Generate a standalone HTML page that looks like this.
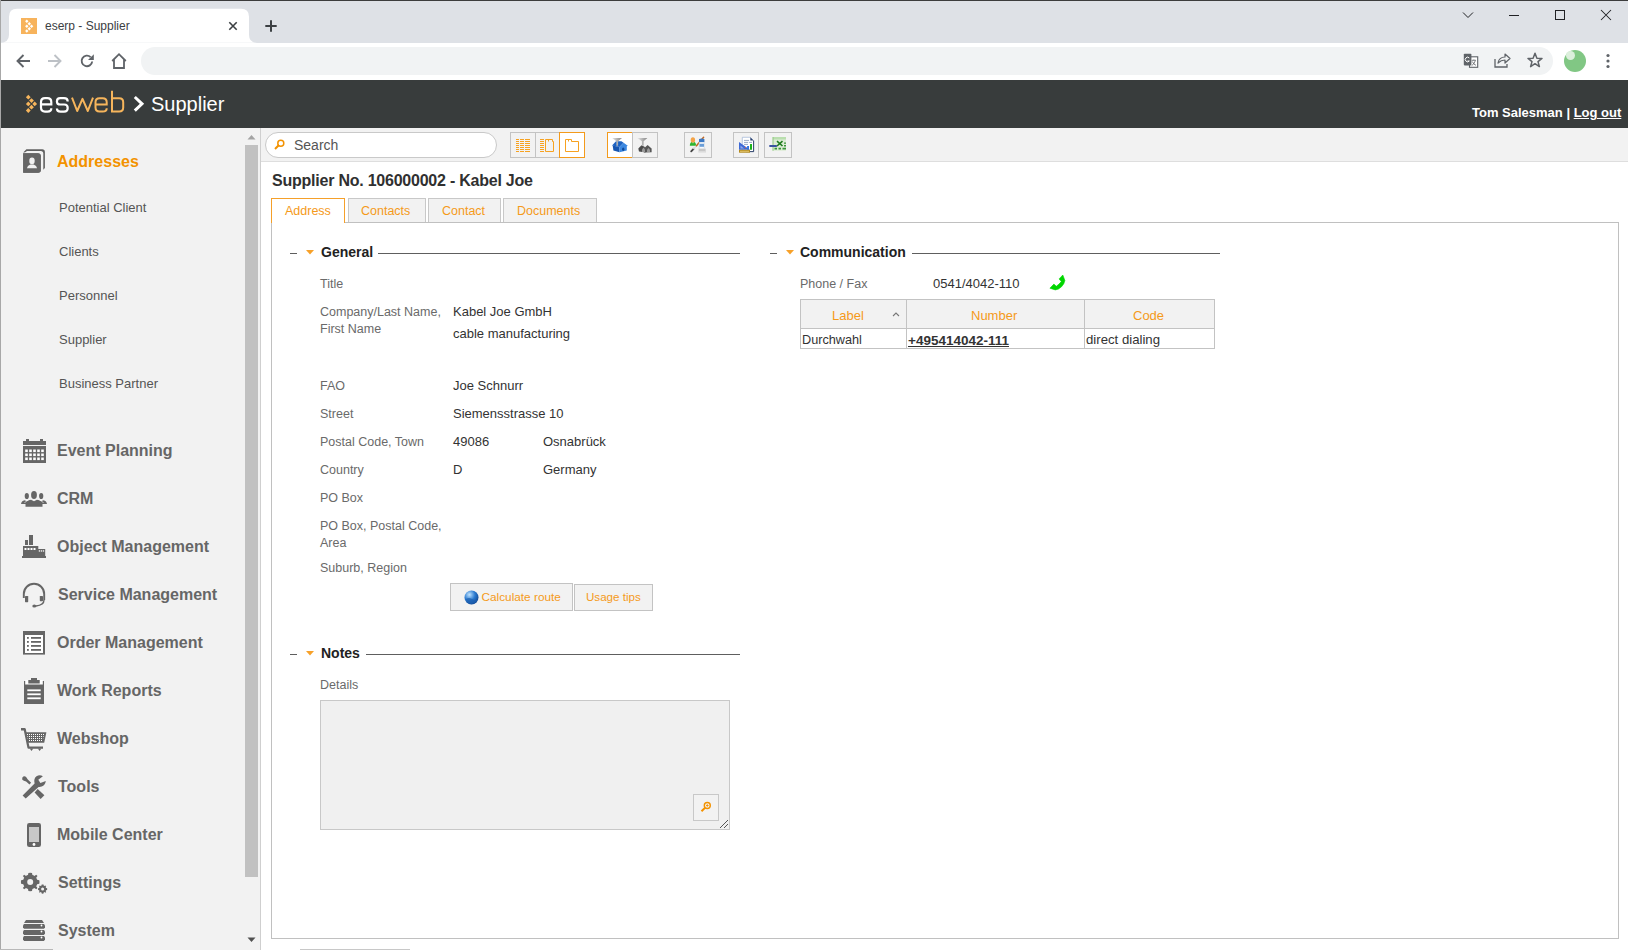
<!DOCTYPE html>
<html><head><meta charset="utf-8">
<style>
*{box-sizing:border-box;margin:0;padding:0}
html,body{width:1628px;height:950px;overflow:hidden;background:#fff;font-family:"Liberation Sans",sans-serif;position:relative}
.a{position:absolute}
.t{position:absolute;line-height:1;white-space:nowrap}
svg{position:absolute;overflow:visible}
#tabbar{left:0;top:0;width:1628px;height:43px;background:#dee1e6;border-top:1px solid #3c3c3c}
#tab{left:8px;top:8px;width:241px;height:34px;background:#fff;border-radius:8px 8px 0 0}
#toolbar{left:0;top:42.7px;width:1628px;height:37.3px;background:#fff}
#omni{left:141px;top:47px;width:1412px;height:28px;background:#f1f3f4;border-radius:14px}
#lframe{left:0;top:0;width:1px;height:950px;background:#a8a8a8}
#apphdr{left:0;top:80px;width:1628px;height:48px;background:#383c3c}
#sidebar{left:0;top:128px;width:260px;height:822px;background:#f2f2f2}
#sbline{left:260px;top:128px;width:1px;height:822px;background:#cfcfcf}
#tb2{left:261px;top:128px;width:1367px;height:34px;background:#f2f2f2;border-bottom:1px solid #dedede}
.side{color:#666;font-weight:bold;font-size:16px}
.sub{color:#555;font-size:13px}
.lbl{color:#6a6a6a;font-size:12.5px}
.val{color:#333;font-size:13px}
.hd{color:#222;font-weight:bold;font-size:14px}
.btn{position:absolute;border:1px solid #c3c3c3;background:#f2f2f2}
.tabx{position:absolute;background:#f2f2f2;border:1px solid #c8c8c8;border-bottom:none}
.or{color:#f59a1a}
</style></head><body>
<!-- browser chrome -->
<div id="tabbar" class="a"></div>
<svg style="left:0;top:0" width="300" height="44" viewBox="0 0 300 44"><path d="M0 42.7Q9 42.7 9 34.7V16.7Q9 8.7 17 8.7H241Q249 8.7 249 16.7V34.7Q249 42.7 257 42.7z" fill="#fff"/></svg>
<div id="toolbar" class="a"></div>
<div id="omni" class="a"></div>
<!-- favicon -->
<div class="a" style="left:21px;top:18px;width:16px;height:16px;background:#f7b35c"></div>
<svg style="left:21px;top:18px" width="16" height="16" viewBox="21 18 16 16"><g fill="#fff"><path d="M26.8 19.6L28.5 21.3L26.8 23L25.1 21.3z"/><path d="M29.3 22L31 23.7L29.3 25.4L27.6 23.7z"/><path d="M26.8 24.6L28.5 26.3L26.8 28L25.1 26.3z"/><path d="M31.6 24.6L33.3 26.3L31.6 28L29.9 26.3z"/><path d="M29.3 27L31 28.7L29.3 30.4L27.6 28.7z"/><path d="M26.8 29.3L28.5 31L26.8 32.7L25.1 31z"/></g></svg>
<div class="t" style="left:45px;top:20px;font-size:12px;color:#3c4043">eserp - Supplier</div>
<svg style="left:228px;top:21px" width="10" height="10" viewBox="0 0 10 10"><path d="M1.3 1.3L8.7 8.7M8.7 1.3L1.3 8.7" stroke="#3c4043" stroke-width="1.6"/></svg>
<svg style="left:264px;top:19px" width="14" height="14" viewBox="0 0 14 14"><path d="M7 1.3V12.7M1.3 7H12.7" stroke="#3c4043" stroke-width="2"/></svg>
<!-- window controls -->
<svg style="left:1462px;top:11px" width="12" height="8" viewBox="0 0 12 8"><path d="M1 1.5L6 6.5L11 1.5" stroke="#202124" stroke-width="1" fill="none"/></svg>
<svg style="left:1500px;top:0" width="128" height="30" viewBox="1500 0 128 30"><rect x="1509" y="15" width="10" height="1" fill="#202124"/><rect x="1555.5" y="10.5" width="9" height="9" stroke="#202124" stroke-width="1" fill="none"/><path d="M1601 10L1611 20M1611 10L1601 20" stroke="#202124" stroke-width="1.05"/></svg>
<!-- nav icons -->
<svg style="left:16px;top:54px" width="14" height="14" viewBox="0 0 14 14"><path d="M14 7H1.5M7.5 1L1.5 7L7.5 13" stroke="#5f6368" stroke-width="1.9" fill="none"/></svg>
<svg style="left:48px;top:54px" width="14" height="14" viewBox="0 0 14 14"><path d="M0 7H12.5M6.5 1L12.5 7L6.5 13" stroke="#bdc1c6" stroke-width="1.9" fill="none"/></svg>
<svg style="left:80px;top:54px" width="14" height="14" viewBox="0 0 14 14"><path d="M12.2 7.5A5.3 5.3 0 1 1 10.6 3.1" stroke="#5f6368" stroke-width="1.9" fill="none"/><path d="M13.8 0.2V6H8z" fill="#5f6368"/></svg>
<svg style="left:111px;top:53px" width="16" height="16" viewBox="0 0 16 16"><path d="M1.2 8L8 1.2L14.8 8M3 6.5V15H13V6.5" stroke="#5f6368" stroke-width="1.8" fill="none" stroke-linejoin="miter"/></svg>
<!-- right chrome icons -->
<svg style="left:1463px;top:53px" width="16" height="16" viewBox="0 0 16 16"><rect x="6.5" y="3.8" width="8.2" height="10.5" fill="#fff" stroke="#5f6368" stroke-width="1.1"/><rect x="0.8" y="0.8" width="7.6" height="11.6" rx="0.8" fill="#5f6368"/><path d="M6.3 5A2.3 2.3 0 1 0 6.3 8H4.5" stroke="#fff" stroke-width="1" fill="none"/><path d="M8.8 7.3H13M10.9 6.5V7.3M9.3 8.5Q10.8 11.8 13 12.3M12.3 7.8Q11 11.5 8.6 12.6" stroke="#5f6368" stroke-width="0.8" fill="none"/></svg>
<svg style="left:1494px;top:53px" width="17" height="15" viewBox="0 0 17 15"><path d="M1 6V14H13V11" stroke="#5f6368" stroke-width="1.3" fill="none"/><path d="M4 10Q5 4 11 4V1L16 5.5L11 10V7Q7 7 4 10z" stroke="#5f6368" stroke-width="1.2" fill="none" stroke-linejoin="round"/></svg>
<svg style="left:1527px;top:52px" width="16" height="16" viewBox="0 0 16 16"><path d="M8 1.3L9.9 6.2L15 6.4L11 9.6L12.4 14.6L8 11.7L3.6 14.6L5 9.6L1 6.4L6.1 6.2z" stroke="#5f6368" stroke-width="1.5" fill="none" stroke-linejoin="round"/></svg>
<div class="a" style="left:1564px;top:50px;width:22px;height:22px;border-radius:50%;background:#81c784"></div>
<div class="a" style="left:1566px;top:51px;width:9px;height:9px;border-radius:50%;background:#dcefdc"></div>
<svg style="left:1605.5px;top:53px" width="4" height="16" viewBox="0 0 4 16"><circle cx="2" cy="2.5" r="1.6" fill="#5f6368"/><circle cx="2" cy="8" r="1.6" fill="#5f6368"/><circle cx="2" cy="13.5" r="1.6" fill="#5f6368"/></svg>

<!-- app header -->
<div id="apphdr" class="a"></div>
<svg style="left:0;top:80px" width="150" height="48" viewBox="0 80 150 48">
 <g fill="#f6b55c"><path d="M28.3 94.8L30.7 97.2L28.3 99.6L25.9 97.2z"/><path d="M31.5 98.2L33.9 100.6L31.5 103L29.1 100.6z"/><path d="M28.3 101.5L30.7 103.9L28.3 106.3L25.9 103.9z"/><path d="M34.7 101.5L37.1 103.9L34.7 106.3L32.3 103.9z"/><path d="M31.5 104.8L33.9 107.2L31.5 109.6L29.1 107.2z"/><path d="M28.3 108.1L30.7 110.5L28.3 112.9L25.9 110.5z"/></g>
 <g fill="none" stroke-width="2.2">
  <path stroke="#fff" d="M41 104.4H51.3V102.2Q51.3 98.2 47.3 98.2H45Q41 98.2 41 102.2V107.6Q41 111.6 45 111.6H47.5Q51.3 111.6 51.3 108.3"/>
  <path stroke="#fff" d="M67.7 101.5Q67.7 98.2 64 98.2H60.3Q56.9 98.2 56.9 101.4Q56.9 104.5 60.3 104.5H64.3Q67.7 104.5 67.7 108Q67.7 111.6 64 111.6H60.5Q56.9 111.6 56.9 108.5"/>
 </g>
 <g fill="none" stroke-width="2" stroke="#f6b55c">
  <path stroke-linejoin="round" d="M72 97.6L77.2 111L82.5 98.8L87.8 111L93 97.6"/>
  <path d="M95.5 104.4H106.7V102.2Q106.7 98.2 102.7 98.2H99.5Q95.5 98.2 95.5 102.2V107.6Q95.5 111.6 99.5 111.6H102.7Q106.7 111.6 106.7 108.3"/>
  <path d="M112 90.8V111.6H119.2Q123.2 111.6 123.2 107.6V102.2Q123.2 98.2 119.2 98.2H112"/>
 </g>
</svg>
<svg style="left:133px;top:96px" width="11" height="16" viewBox="0 0 11 16"><path d="M1.8 1L9 7.8L1.8 14.6" stroke="#fff" stroke-width="3" fill="none"/></svg>
<div class="t" style="left:151px;top:94px;font-size:20px;color:#fff">Supplier</div>
<div class="t" style="left:1472px;top:106px;font-size:13px;color:#fff;font-weight:bold">Tom Salesman | <span style="text-decoration:underline">Log out</span></div>

<!-- sidebar -->
<div id="sidebar" class="a"></div>
<div id="lframe" class="a"></div>
<div id="sbline" class="a"></div>
<!-- scrollbar -->
<div class="a" style="left:245px;top:145px;width:13px;height:732px;background:#c1c1c1"></div>
<svg style="left:247px;top:134px" width="9" height="6" viewBox="0 0 9 6"><path d="M0.5 5.5L4.5 1L8.5 5.5z" fill="#a3a3a3"/></svg>
<svg style="left:247px;top:937px" width="9" height="6" viewBox="0 0 9 6"><path d="M0.5 0.5L4.5 5L8.5 0.5z" fill="#505050"/></svg>

<!-- Addresses -->
<svg style="left:20px;top:146px" width="28" height="30" viewBox="20 146 28 30">
 <path d="M23.2 152.6L26.4 149.2H42.2Q44.9 149.2 44.9 151.9V168.1L43.3 169.8V153.4Q43.3 150.9 40.7 150.9H27L24.9 152.6z" fill="#616161"/>
 <path d="M23.2 153.3H37.8Q40.8 153.3 40.8 156.3V170.1Q40.8 172.8 38.1 172.8H23.2z" fill="#666" stroke="#fafafa" stroke-width="0.9" paint-order="stroke"/>
 <path d="M23.2 153.3H37.8Q40.8 153.3 40.8 156.3V170.1Q40.8 172.8 38.1 172.8H23.2z" fill="#666"/>
 <ellipse cx="32" cy="160.9" rx="2.7" ry="3.3" fill="#f0f0f0"/>
 <path d="M26.9 168.3Q27.3 165.8 30.3 164.6H33.7Q36.7 165.8 37.1 168.3z" fill="#f0f0f0"/>
</svg>
<div class="t" style="left:57px;top:153.5px;font-size:16px;font-weight:bold;color:#f39200">Addresses</div>
<div class="t sub" style="left:59px;top:201px">Potential Client</div>
<div class="t sub" style="left:59px;top:245px">Clients</div>
<div class="t sub" style="left:59px;top:289px">Personnel</div>
<div class="t sub" style="left:59px;top:333px">Supplier</div>
<div class="t sub" style="left:59px;top:377px">Business Partner</div>

<svg style="left:0;top:0" width="60" height="950" viewBox="0 0 60 950">
 <g fill="#666">
  <!-- calendar -->
  <rect x="26" y="439" width="3" height="3"/><rect x="40" y="439" width="3" height="3"/>
  <rect x="23" y="441" width="23" height="4"/>
  <path d="M23 446H46V463H23z"/>
 </g>
 <g fill="#fff">
  <rect x="25.2" y="449.5" width="2.6" height="2.6"/><rect x="29.2" y="449.5" width="2.6" height="2.6"/><rect x="33.2" y="449.5" width="2.6" height="2.6"/><rect x="37.2" y="449.5" width="2.6" height="2.6"/><rect x="41.2" y="449.5" width="2.6" height="2.6"/>
  <rect x="25.2" y="453.5" width="2.6" height="2.6"/><rect x="29.2" y="453.5" width="2.6" height="2.6"/><rect x="33.2" y="453.5" width="2.6" height="2.6"/><rect x="37.2" y="453.5" width="2.6" height="2.6"/><rect x="41.2" y="453.5" width="2.6" height="2.6"/>
  <rect x="25.2" y="457.5" width="2.6" height="2.6"/><rect x="29.2" y="457.5" width="2.6" height="2.6"/><rect x="33.2" y="457.5" width="2.6" height="2.6"/><rect x="37.2" y="457.5" width="2.6" height="2.6"/><rect x="41.2" y="457.5" width="2.6" height="2.6"/>
 </g>
 <g fill="#666">
  <!-- CRM -->
  <ellipse cx="26.8" cy="496" rx="2.1" ry="3.1"/><path d="M21 504Q21.3 501 24.6 500.2L26.8 501.2L29 500.2L31 501V504z"/>
  <ellipse cx="41.2" cy="496" rx="2.1" ry="3.1"/><path d="M47 504Q46.7 501 43.4 500.2L41.2 501.2L39 500.2L37 501V504z"/>
  <path d="M24.5 503Q26 500.5 29 500.2" stroke="#fff" stroke-width="0.8" fill="none" opacity="0.8"/><path d="M43.5 503Q42 500.5 39 500.2" stroke="#fff" stroke-width="0.8" fill="none" opacity="0.8"/>
  <ellipse cx="34" cy="495" rx="2.9" ry="4.1"/><path d="M25.5 506.8V503.8Q26.8 500.6 31 499.8L34 501.2L37 499.8Q41.2 500.6 42.5 503.8V506.8z"/>
  <!-- factory -->
  <rect x="25" y="540" width="3" height="5"/><rect x="29" y="535" width="4" height="10"/>
  <path d="M23 546H38.3V549H45.2V556H23z"/><rect x="22" y="556" width="24" height="2"/>
  <!-- headset -->
  <path d="M23.8 598V594A10.2 10.2 0 0 1 44.2 594V600" stroke="#666" stroke-width="1.9" fill="none"/>
  <rect x="25" y="596" width="3.2" height="6.2" rx="0.6"/><rect x="39.8" y="596" width="3.2" height="5.2" rx="0.6"/>
  <path d="M44 600Q44 605 36 606" stroke="#666" stroke-width="1.4" fill="none"/><ellipse cx="34.3" cy="606" rx="2" ry="1.5"/>
  <!-- order list -->
  <path d="M23 631H45V654.6H23z"/>
  <!-- clipboard -->
  <rect x="24" y="681" width="20" height="23"/>
 </g>
 <g fill="#fff">
  <rect x="23.7" y="546.8" width="1.4" height="1.4" opacity="0"/>
  <rect x="24.5" y="548" width="2" height="2"/><rect x="27.5" y="548" width="2" height="2"/><rect x="30.5" y="548" width="2" height="2"/><rect x="33.5" y="548" width="2" height="2"/>
  <rect x="38.8" y="550.3" width="1.3" height="1.3"/><rect x="40.8" y="550.3" width="1.3" height="1.3"/><rect x="42.8" y="550.3" width="1.3" height="1.3"/>
  <rect x="25" y="635" width="18" height="18"/>
  <rect x="25.2" y="680" width="17.6" height="4.5"/>
  <rect x="27.3" y="689.4" width="13.4" height="1.8"/><rect x="27.3" y="693.4" width="13.4" height="1.8"/><rect x="27.3" y="697.4" width="13.4" height="1.8"/>
 </g>
 <g fill="#666">
  <rect x="27" y="637" width="1.8" height="1.8"/><rect x="27" y="641" width="1.8" height="1.8"/><rect x="27" y="645" width="1.8" height="1.8"/><rect x="27" y="649" width="1.8" height="1.8"/>
  <rect x="31" y="637" width="10" height="1.8"/><rect x="31" y="641" width="10" height="1.8"/><rect x="31" y="645" width="10" height="1.8"/><rect x="31" y="649" width="10" height="1.8"/>
  <rect x="31" y="678" width="6" height="2"/><path d="M28.3 680H39.7V683.5H28.3z"/>
  <!-- cart -->
  <path d="M21 728H24.6Q25.6 728 25.8 729L29.4 746.6H43V748.8H28.5Q27.6 748.8 27.4 747.8L23.8 730.6H21z"/>
  <path d="M25.7 732.3H46.4L44.2 742.8H27.9z"/>
  <path d="M29.7 748.5H33.3L31.5 751.1zM37.8 748.5H41.4L39.6 751.1z"/>
 </g>
 <g fill="#fff">
  <rect x="27" y="734" width="1" height="1"/>
  <rect x="29" y="734" width="1" height="1"/>
  <rect x="31" y="734" width="1" height="1"/>
  <rect x="33" y="734" width="1" height="1"/>
  <rect x="35" y="734" width="1" height="1"/>
  <rect x="37" y="734" width="1" height="1"/>
  <rect x="39" y="734" width="1" height="1"/>
  <rect x="41" y="734" width="1" height="1"/>
  <rect x="43" y="734" width="1" height="1"/>
  <rect x="27" y="736" width="1" height="1" opacity="0.6"/>
  <rect x="29" y="736" width="1" height="1"/>
  <rect x="31" y="736" width="1" height="1"/>
  <rect x="33" y="736" width="1" height="1"/>
  <rect x="35" y="736" width="1" height="1"/>
  <rect x="37" y="736" width="1" height="1"/>
  <rect x="39" y="736" width="1" height="1"/>
  <rect x="41" y="736" width="1" height="1"/>
  <rect x="43" y="736" width="1" height="1" opacity="0.6"/>
  <rect x="27" y="738" width="1" height="1" opacity="0.25"/>
  <rect x="29" y="738" width="1" height="1"/>
  <rect x="31" y="738" width="1" height="1"/>
  <rect x="33" y="738" width="1" height="1"/>
  <rect x="35" y="738" width="1" height="1"/>
  <rect x="37" y="738" width="1" height="1"/>
  <rect x="39" y="738" width="1" height="1"/>
  <rect x="41" y="738" width="1" height="1"/>
  <rect x="43" y="738" width="1" height="1" opacity="0.25"/>
  <rect x="29" y="740" width="1" height="1"/>
  <rect x="31" y="740" width="1" height="1"/>
  <rect x="33" y="740" width="1" height="1"/>
  <rect x="35" y="740" width="1" height="1"/>
  <rect x="37" y="740" width="1" height="1"/>
  <rect x="39" y="740" width="1" height="1"/>
  <rect x="41" y="740" width="1" height="1"/>
 </g>
 <g fill="#666">
  <!-- tools -->
  <path d="M22.3 779.7Q21.7 777.6 23.3 776.6Q24.9 775.8 26.3 777.2L27.8 779.4L31.1 782.8L29.5 784.6L26.1 781.4L23.9 780.8z"/>
  <path d="M34.6 792.4L37.7 789.1L44.4 795.3L40.6 799z"/>
  <path d="M22.6 795.4L34.6 783.4Q33.4 778.6 36.5 776.3Q39.6 774.2 42.9 776.3L38.3 779.8L40.4 783.1L45.8 781.1Q45.2 785.3 41.7 786.6Q39.7 787.3 38.6 786.9L25.7 798.4z"/>
  <!-- mobile -->
  <rect x="27" y="823" width="14" height="24" rx="2.3"/>
  <!-- gears -->
  <path d="M30.2 872.7L32 872.9L32.4 875.1A7 7 0 0 1 34.4 876L36.2 874.7L37.5 876L36.2 877.8A7 7 0 0 1 37.1 879.8L39.3 880.2L39.5 882L39.3 883.8L37.1 884.2A7 7 0 0 1 36.2 886.2L37.5 888L36.2 889.3L34.4 888A7 7 0 0 1 32.4 888.9L32 891.1L30.2 891.3L28.4 891.1L28 888.9A7 7 0 0 1 26 888L24.2 889.3L22.9 888L24.2 886.2A7 7 0 0 1 23.3 884.2L21.1 883.8L20.9 882L21.1 880.2L23.3 879.8A7 7 0 0 1 24.2 877.8L22.9 876L24.2 874.7L26 876A7 7 0 0 1 28 875.1L28.4 872.9z M30.2 879A3 3 0 1 0 30.2 885A3 3 0 1 0 30.2 879z" fill-rule="evenodd"/>
  <path d="M42.6 884.4L43.5 884.6L43.7 885.6A3.4 3.4 0 0 1 44.6 886.1L45.5 885.5L46.2 886.2L45.6 887.1A3.4 3.4 0 0 1 46.1 888L47.1 888.2L47.2 889.1L47.1 890L46.1 890.2A3.4 3.4 0 0 1 45.6 891.1L46.2 892L45.5 892.7L44.6 892.1A3.4 3.4 0 0 1 43.7 892.6L43.5 893.6L42.6 893.8L41.7 893.6L41.5 892.6A3.4 3.4 0 0 1 40.6 892.1L39.7 892.7L39 892L39.6 891.1A3.4 3.4 0 0 1 39.1 890.2L38.1 890L38 889.1L38.1 888.2L39.1 888A3.4 3.4 0 0 1 39.6 887.1L39 886.2L39.7 885.5L40.6 886.1A3.4 3.4 0 0 1 41.5 885.6L41.7 884.6z M42.6 887.6A1.5 1.5 0 1 0 42.6 890.6A1.5 1.5 0 1 0 42.6 887.6z" fill-rule="evenodd"/>
  <!-- system -->
  <path d="M26 920H42L44 923H24z"/>
  <path d="M24 924H44L45 925.5V927.2L44 928.8H24L23 927.2V925.5z"/>
  <path d="M24 930H44L45 931.5V933.3L44 935H24L23 933.3V931.5z"/>
  <path d="M24 936H44L45 937.5V939.3L44 941H24L23 939.3V937.5z"/>
 </g>
 <rect x="29" y="827" width="10" height="15" fill="#c8c8c8"/>
 <circle cx="34" cy="844.5" r="1.4" fill="#fff"/>
 <g fill="#fff"><circle cx="41.5" cy="925.5" r="0.9"/><circle cx="41.5" cy="931.5" r="0.9"/><circle cx="41.5" cy="937.5" r="0.9"/></g>
</svg>
<div class="t side" style="left:57px;top:442.5px">Event Planning</div>
<div class="t side" style="left:57px;top:490.5px">CRM</div>
<div class="t side" style="left:57px;top:538.5px">Object Management</div>
<div class="t side" style="left:58px;top:586.5px">Service Management</div>
<div class="t side" style="left:57px;top:634.5px">Order Management</div>
<div class="t side" style="left:57px;top:682.5px">Work Reports</div>
<div class="t side" style="left:57px;top:730.5px">Webshop</div>
<div class="t side" style="left:58px;top:778.5px">Tools</div>
<div class="t side" style="left:57px;top:826.5px">Mobile Center</div>
<div class="t side" style="left:58px;top:874.5px">Settings</div>
<div class="t side" style="left:58px;top:922.5px">System</div>

<!-- toolbar -->
<div id="tb2" class="a"></div>
<div class="a" style="left:265px;top:132px;width:232px;height:26px;border:1px solid #c9c9c9;border-radius:13px;background:#fff"></div>
<svg style="left:274px;top:139px" width="11" height="11" viewBox="0 0 11 11"><circle cx="6.8" cy="4.2" r="3" stroke="#f39200" stroke-width="1.5" fill="none"/><path d="M4.7 6.3L1 10" stroke="#f39200" stroke-width="2"/></svg>
<div class="t" style="left:294px;top:138px;font-size:14px;color:#555">Search</div>

<div class="btn" style="left:510px;top:132px;width:26px;height:26px"></div>
<div class="btn" style="left:535px;top:132px;width:25px;height:26px"></div>
<div class="a" style="left:559px;top:132px;width:26px;height:26px;border:1px solid #f39a1b;background:#fff"></div>
<svg style="left:510px;top:132px" width="76" height="26" viewBox="510 132 76 26">
 <path fill="#f7a221" d="M516 139h3v1h-3zM520 139h4v1h-4zM525 139h5v1h-5zM516 141h3v1h-3zM520 141h4v1h-4zM525 141h5v1h-5zM516 143h3v1h-3zM520 143h4v1h-4zM525 143h5v1h-5zM516 145h3v1h-3zM520 145h4v1h-4zM525 145h5v1h-5zM516 147h3v1h-3zM520 147h4v1h-4zM525 147h5v1h-5zM516 149h3v1h-3zM520 149h4v1h-4zM525 149h5v1h-5zM516 151h3v1h-3zM520 151h4v1h-4zM525 151h5v1h-5z"/>
 <path fill="#f7a221" d="M540 139h4v1h-4zM540 141h4v1h-4zM540 143h4v1h-4zM540 145h4v1h-4zM540 147h4v1h-4zM540 149h4v1h-4zM540 151h4v1h-4z"/>
 <path d="M545.5 151.5V139.5H552.5V141.5H553.5V151.5zM548.5 139.5V141.5" stroke="#f7a221" stroke-width="1" fill="none"/>
 <path d="M565.5 151.5V139.5H571.5V141.5H578.5V151.5zM568.5 139.5V141.5" stroke="#f7a221" stroke-width="1" fill="none"/>
</svg>
<div class="a" style="left:607px;top:132px;width:26px;height:26px;border:1px solid #f39a1b;background:#fff"></div>
<div class="btn" style="left:632px;top:132px;width:26px;height:26px"></div>
<svg style="left:606px;top:132px" width="52" height="26" viewBox="606 132 52 26">
 <defs><linearGradient id="fn" x1="0" x2="1"><stop offset="0" stop-color="#e6e6e6"/><stop offset="0.6" stop-color="#a9a9a9"/><stop offset="1" stop-color="#8a8a8a"/></linearGradient></defs>
 <path d="M612.7 145.6L619.5 147V152.2L613.4 150.6z" fill="#1856b0"/>
 <path d="M612 145.4L616 141.2H621.4L623.6 142.8L619.5 147z" fill="#1d62c2"/>
 <path d="M619.5 147L623.6 142.8L627.8 145.8L626.8 146.2V150.6L619.5 152.2z" fill="#3b87e0"/>
 <ellipse cx="623.2" cy="149.3" rx="1.2" ry="1.8" fill="#0d4a9c"/>
 <path d="M612.1 137.9H622L618.1 141.2V145.7H616.4V141.2z" fill="url(#fn)"/>
 <path d="M638.3 148.5L641.5 145.2L644.5 146.8L645.5 149V152.4L639 151.6z" fill="#4b4b4b"/>
 <path d="M643.8 148.6L647.6 145L651.6 148.4L651.6 152.2L644.2 152.4z" fill="#565656"/>
 <path d="M642 152V149.5L643.5 147.6L645 149.5V152z" fill="#9a9a9a"/>
 <path d="M647 152V149.8L648.5 148L650 149.8V152z" fill="#9a9a9a"/>
 <path d="M637.4 137.9H647.4L643.6 141.2V145.7H641.9V141.2z" fill="url(#fn)"/>
</svg>
<div class="btn" style="left:684px;top:132px;width:28px;height:26px"></div>
<svg style="left:684px;top:132px" width="28" height="26" viewBox="684 132 28 26">
 <path d="M689.8 145.8Q689.8 142 693 141.8Q696.1 142 696.1 145.8z" fill="#2eb52e"/>
 <path d="M692.2 142.2L693 143.6L693.8 142.2z" fill="#fff"/>
 <ellipse cx="692.9" cy="139.9" rx="2.2" ry="2.7" fill="#f3a347"/>
 <path d="M691.2 151.4L693.6 148.8" stroke="#444" stroke-width="1.8" stroke-linecap="round"/>
 <path d="M693.4 149L696.8 145.4" stroke="#ddd" stroke-width="1.5"/>
 <path d="M696.5 145.8L703.6 137.3" stroke="#c2651e" stroke-width="1.5" stroke-linecap="round"/>
 <path d="M699.2 142.2H704.3V149H699.2z" fill="#f7f9fc" stroke="#c5d2e2" stroke-width="0.6"/>
 <path d="M699 139Q701.7 138.2 704.4 139V142H699z" fill="#3a78c4"/>
 <path d="M699.5 143.8H704V146.8H699.5z" fill="#6a9ed8"/>
 <path d="M698.3 148.6H706V152.6H698.3z" fill="#dcdcdc"/>
 <path d="M699 150H705.2" stroke="#999" stroke-width="0.6"/>
</svg>
<div class="btn" style="left:733px;top:132px;width:26px;height:26px"></div>
<svg style="left:733px;top:132px" width="26" height="26" viewBox="733 132 26 26">
 <path d="M742.3 137.3H750.3L753.6 140.6V151.6H742.3z" fill="#fff" stroke="#9fb4d6" stroke-width="0.7"/>
 <path d="M753.6 140.6V151.6H746" stroke="#24385f" stroke-width="0.9" fill="none"/>
 <path d="M750.3 137.3L753.6 140.6H750.3z" fill="#2c4270"/>
 <path d="M744 140.4H749M744 142.4H748.2M749.2 142.4H752M744 144.4H748" stroke="#6f87ad" stroke-width="0.7"/>
 <path d="M739 142V149.8H750z" fill="#3e6ad6"/>
 <path d="M740.5 145.5V148.6H744z" fill="#8ea9ea"/>
 <path d="M747.1 146H749V149.8H747.1z" fill="#2f73e0"/>
 <path d="M750 144H752V149.8H750z" fill="#1cb11c"/>
 <circle cx="745.4" cy="147.5" r="0.6" fill="#ff5a1e"/>
 <path d="M739 149.8H750V152.7H739z" fill="#b48a1c"/>
 <path d="M740 150.8H749V151.6H740z" fill="#f3d98a"/>
</svg>
<div class="btn" style="left:764px;top:132px;width:28px;height:26px"></div>
<svg style="left:764px;top:132px" width="28" height="26" viewBox="764 132 28 26">
 <path d="M773 137H786V150.8H773z" fill="#dcebd5"/>
 <path d="M773 137H786V139.5H773z" fill="#b9deae"/>
 <path d="M773 137V150.8" stroke="#8fc77f" stroke-width="1"/>
 <path d="M784 142.4H786V143.8H784zM784 145H786V146.4H784zM774.5 147.8H777V149.5H774.5zM778.5 147.8H781V149.5H778.5zM782.5 147.8H786V149.5H782.5z" fill="#3a963a"/>
 <path d="M777 141.2L782.5 146M782.5 141.2L777 146" stroke="#1f7a1f" stroke-width="1.6"/>
 <path d="M770 146H776.2" stroke="#3a52a0" stroke-width="1.8" stroke-linecap="round"/>
</svg>

<!-- title -->
<div class="t" style="left:272px;top:172.5px;font-size:16px;font-weight:bold;color:#303030;letter-spacing:-0.23px">Supplier No. 106000002 - Kabel Joe</div>

<!-- content panel -->
<div class="a" style="left:271px;top:222px;width:1348px;height:717px;border:1px solid #c0c0c0;background:#fff"></div>
<!-- tabs -->
<div class="a" style="left:271px;top:198px;width:74px;height:25px;border:1px solid #f5a02a;border-bottom:none;background:#fff"></div>
<div class="tabx" style="left:348px;top:198px;width:78px;height:24px"></div>
<div class="tabx" style="left:428px;top:198px;width:73px;height:24px"></div>
<div class="tabx" style="left:503px;top:198px;width:94px;height:24px"></div>
<div class="t or" style="left:285px;top:205px;font-size:12.5px">Address</div>
<div class="t or" style="left:361px;top:205px;font-size:12.5px">Contacts</div>
<div class="t or" style="left:442px;top:205px;font-size:12.5px">Contact</div>
<div class="t or" style="left:517px;top:205px;font-size:12.5px">Documents</div>

<!-- General -->
<div class="a" style="left:290px;top:253.2px;width:7px;height:1.3px;background:#5e5e5e"></div>
<svg style="left:306px;top:250px" width="8" height="5" viewBox="0 0 8 5"><path d="M0 0H8L4 4.5z" fill="#f7a12a"/></svg>
<div class="t hd" style="left:321px;top:244.8px">General</div>
<div class="a" style="left:378px;top:253px;width:362px;height:1.3px;background:#5e5e5e"></div>
<div class="t lbl" style="left:320px;top:278.4px">Title</div>
<div class="t lbl" style="left:320px;top:306px">Company/Last Name,</div>
<div class="t lbl" style="left:320px;top:323px">First Name</div>
<div class="t lbl" style="left:320px;top:380px">FAO</div>
<div class="t lbl" style="left:320px;top:408.4px">Street</div>
<div class="t lbl" style="left:320px;top:436.4px">Postal Code, Town</div>
<div class="t lbl" style="left:320px;top:464.4px">Country</div>
<div class="t lbl" style="left:320px;top:492.4px">PO Box</div>
<div class="t lbl" style="left:320px;top:520.4px">PO Box, Postal Code,</div>
<div class="t lbl" style="left:320px;top:537.4px">Area</div>
<div class="t lbl" style="left:320px;top:562.4px">Suburb, Region</div>
<div class="t val" style="left:453px;top:304.5px">Kabel Joe GmbH</div>
<div class="t val" style="left:453px;top:326.8px">cable manufacturing</div>
<div class="t val" style="left:453px;top:378.5px">Joe Schnurr</div>
<div class="t val" style="left:453px;top:406.5px">Siemensstrasse 10</div>
<div class="t val" style="left:453px;top:434.5px">49086</div>
<div class="t val" style="left:543px;top:434.5px">Osnabrück</div>
<div class="t val" style="left:453px;top:462.5px">D</div>
<div class="t val" style="left:543px;top:462.5px">Germany</div>
<!-- buttons -->
<div class="btn" style="left:450px;top:583px;width:123px;height:28px"></div>
<div class="btn" style="left:574px;top:584px;width:79px;height:27px"></div>
<svg style="left:464px;top:590px" width="15" height="15" viewBox="0 0 15 15"><defs><radialGradient id="gl" cx="0.35" cy="0.3" r="0.8"><stop offset="0" stop-color="#bfe3ff"/><stop offset="0.5" stop-color="#2a7ad0"/><stop offset="1" stop-color="#0b3d86"/></radialGradient></defs><circle cx="7.5" cy="7.5" r="7" fill="url(#gl)"/><path d="M2 9Q5 7 8 9T13.5 9.5Q12 13.5 7.5 14Q3 13.5 2 9z" fill="#1d5fb0" opacity="0.7"/></svg>
<div class="t or" style="left:481.5px;top:591.7px;font-size:11.8px">Calculate route</div>
<div class="t or" style="left:586px;top:590.7px;font-size:11.6px">Usage tips</div>
<!-- Notes -->
<div class="a" style="left:290px;top:654.2px;width:7px;height:1.3px;background:#5e5e5e"></div>
<svg style="left:306px;top:651px" width="8" height="5" viewBox="0 0 8 5"><path d="M0 0H8L4 4.5z" fill="#f7a12a"/></svg>
<div class="t hd" style="left:321px;top:645.9px">Notes</div>
<div class="a" style="left:366px;top:654px;width:374px;height:1.3px;background:#5e5e5e"></div>
<div class="t lbl" style="left:320px;top:679.4px">Details</div>
<div class="a" style="left:320px;top:700px;width:410px;height:130px;border:1px solid #c8c8c8;background:#f0f0f0"></div>
<div class="a" style="left:693px;top:794px;width:26px;height:27px;border:1px solid #c8c8c8;background:#f2f2f2"></div>
<svg style="left:700px;top:801px" width="12" height="12" viewBox="0 0 12 12"><circle cx="7.3" cy="4.5" r="3" stroke="#f39200" stroke-width="1.4" fill="none"/><path d="M6 4.5H8.6M7.3 3.2V5.8" stroke="#f39200" stroke-width="0.9"/><path d="M5.2 6.6L1.5 10.3" stroke="#f39200" stroke-width="2"/></svg>
<svg style="left:719px;top:819px" width="10" height="10" viewBox="0 0 10 10"><path d="M9 1L1 9M9 5L5 9" stroke="#555" stroke-width="1"/></svg>

<!-- Communication -->
<div class="a" style="left:770px;top:253.2px;width:7px;height:1.3px;background:#5e5e5e"></div>
<svg style="left:786px;top:250px" width="8" height="5" viewBox="0 0 8 5"><path d="M0 0H8L4 4.5z" fill="#f7a12a"/></svg>
<div class="t hd" style="left:800px;top:244.8px">Communication</div>
<div class="a" style="left:912px;top:253px;width:308px;height:1.3px;background:#5e5e5e"></div>
<div class="t lbl" style="left:800px;top:277.7px">Phone / Fax</div>
<div class="t val" style="left:933px;top:276.8px">0541/4042-110</div>
<svg style="left:1040px;top:268px" width="32" height="28" viewBox="1040 268 32 28"><path d="M1062.8 275L1064.9 280.5Q1064.5 283.5 1061.5 286.8Q1058.5 289.8 1055.3 289.9L1049.9 288.2L1053.9 284.1L1056.3 286.3Q1058.8 284.7 1061.3 281.6L1059.1 278.9z" fill="#00d600" stroke="#00d600" stroke-width="0.6" stroke-linejoin="round"/></svg>
<!-- table -->
<div class="a" style="left:800px;top:299px;width:415px;height:50px;border:1px solid #c3c3c3;background:#fff"></div>
<div class="a" style="left:801px;top:300px;width:413px;height:28px;background:#f2f2f2"></div>
<div class="a" style="left:801px;top:328px;width:413px;height:1px;background:#c3c3c3"></div>
<div class="a" style="left:906px;top:300px;width:1px;height:48px;background:#c3c3c3"></div>
<div class="a" style="left:1084px;top:300px;width:1px;height:48px;background:#c3c3c3"></div>
<div class="t or" style="left:832px;top:308.5px;font-size:13px">Label</div>
<svg style="left:892px;top:312px" width="8" height="5" viewBox="0 0 8 5"><path d="M1 4L4 1L7 4" stroke="#777" stroke-width="1.1" fill="none"/></svg>
<div class="t or" style="left:971px;top:308.5px;font-size:13px">Number</div>
<div class="t or" style="left:1133px;top:308.5px;font-size:13px">Code</div>
<div class="t val" style="left:802px;top:333.5px;font-size:12.7px">Durchwahl</div>
<div class="t val" style="left:908px;top:333.5px;font-size:13.5px;font-weight:bold;text-decoration:underline">+495414042-111</div>
<div class="t val" style="left:1086px;top:333px;font-size:13.2px">direct dialing</div>

<!-- bottom taskbar strip -->
<div class="a" style="left:0;top:949px;width:53px;height:1px;background:#b8b8b8"></div><div class="a" style="left:300px;top:949px;width:110px;height:1px;background:#c8c8c8"></div>
</body></html>
